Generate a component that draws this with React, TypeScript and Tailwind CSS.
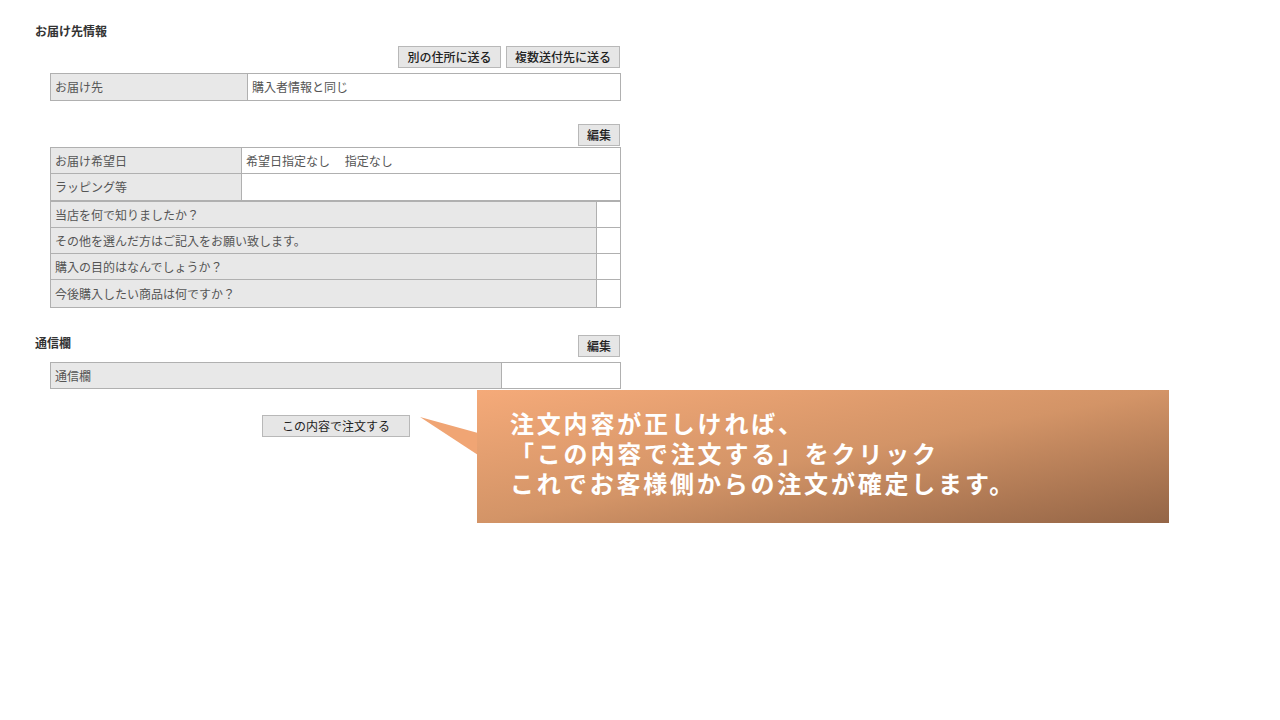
import React from "react";

const font = { fontFamily: '"Noto Sans CJK JP", "Noto Sans", sans-serif' };

function Btn({ children, className = "" }: { children: React.ReactNode; className?: string }) {
  return (
    <div
      className={`h-[22px] flex items-center justify-center bg-[#e6e6e6] border border-[#b8b8b8] text-[12px] text-[#222] font-medium ${className}`}
    >
      {children}
    </div>
  );
}

function Row({
  label,
  value,
  labelW,
  h,
  last,
}: {
  label: string;
  value?: string;
  labelW: string;
  h: string;
  last?: boolean;
}) {
  return (
    <div className={`flex ${h} ${last ? "" : "border-b border-[#b0b0b0]"}`}>
      <div className={`${labelW} shrink-0 bg-[#e8e8e8] border-r border-[#b0b0b0] flex items-center pl-[4px] text-[12px] text-[#555]`}>
        {label}
      </div>
      <div className="flex-1 bg-white flex items-center pl-[4px] text-[12px] text-[#555]">{value}</div>
    </div>
  );
}

export default function App() {
  return (
    <div className="relative w-[1280px] h-[720px] bg-white overflow-hidden" style={font}>
      <div className="ml-[35px] w-[586px] pt-[23px]">
        <div className="text-[12px] font-bold text-[#333] leading-[16px]">お届け先情報</div>
        <div className="flex justify-end gap-[5px] mt-[7px] pr-[1px]">
          <Btn className="w-[103px]">別の住所に送る</Btn>
          <Btn className="w-[114px]">複数送付先に送る</Btn>
        </div>
        <div className="ml-[15px] mt-[5px] border border-[#b0b0b0]">
          <Row label="お届け先" value="購入者情報と同じ" labelW="w-[197px]" h="h-[26px]" last />
        </div>

        <div className="flex justify-end mt-[23px] pr-[1px]">
          <Btn className="w-[42px]">編集</Btn>
        </div>
        <div className="ml-[15px] mt-[1px] border border-[#b0b0b0]">
          <Row label="お届け希望日" value="希望日指定なし　 指定なし" labelW="w-[191px]" h="h-[26px]" />
          <Row label="ラッピング等" labelW="w-[191px]" h="h-[26px]" last />
        </div>
        <div className="ml-[15px] border border-[#b0b0b0]">
          <Row label="当店を何で知りましたか？" labelW="w-[546px]" h="h-[26px]" />
          <Row label="その他を選んだ方はご記入をお願い致します。" labelW="w-[546px]" h="h-[26px]" />
          <Row label="購入の目的はなんでしょうか？" labelW="w-[546px]" h="h-[26px]" />
          <Row label="今後購入したい商品は何ですか？" labelW="w-[546px]" h="h-[27px]" last />
        </div>

        <div className="flex items-center justify-between mt-[27px] pr-[1px]">
          <div className="text-[12px] font-bold text-[#333] leading-[16px] -mt-[6px]">通信欄</div>
          <Btn className="w-[42px]">編集</Btn>
        </div>
        <div className="ml-[15px] mt-[5px] border border-[#b0b0b0]">
          <Row label="通信欄" labelW="w-[451px]" h="h-[25px]" last />
        </div>

        <div className="flex mt-[26px] ml-[227px]">
          <Btn className="w-[148px] font-normal">この内容で注文する</Btn>
        </div>
      </div>

      {/* callout */}
      <svg className="absolute left-[418px] top-[414px]" width="62" height="44" viewBox="0 0 62 44">
        <polygon points="2,3 60,19 60,41" fill="#f0a574" />
      </svg>
      <div className="absolute left-[477px] top-[390px] w-[692px] h-[133px] bg-linear-to-br from-[#f5aa79] via-[#d39467] to-[#946546] pl-[33px] pt-[18px]">
        <div className="text-white text-[24px] font-bold leading-[30px] tracking-[2.8px]">
          <div>注文内容が正しければ、</div>
          <div>「この内容で注文する」をクリック</div>
          <div>これでお客様側からの注文が確定します。</div>
        </div>
      </div>
    </div>
  );
}
